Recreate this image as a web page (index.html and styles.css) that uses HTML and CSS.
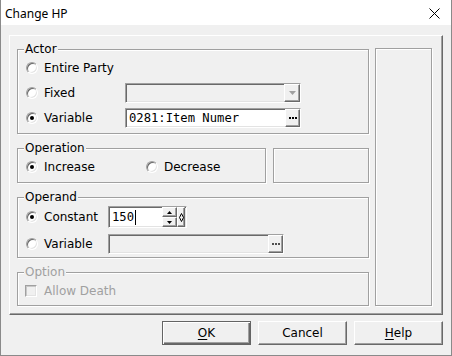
FILE: index.html
```html
<!DOCTYPE html>
<html lang="en">
<head>
  <meta charset="UTF-8">
  <title>Change HP</title>
  <link rel="stylesheet" href="styles.css">
</head>
<body>
  <div class="window">
    <div class="titlebar">
      <span class="title">Change HP</span>
      <svg class="close" width="11" height="11" viewBox="0 0 11 11">
        <path d="M0.5 0.5 L10.5 10.5 M10.5 0.5 L0.5 10.5" stroke="#000" stroke-width="1" fill="none"/>
      </svg>
    </div>

    <div class="client">
      <div class="panel">
        <div class="groups">
          <!-- Actor -->
          <div class="group actor">
            <div class="legend">Actor</div>
            <div class="row first">
              <span class="opt"><span class="radio"></span>Entire Party</span>
            </div>
            <div class="row">
              <span class="opt w99"><span class="radio"></span>Fixed</span>
              <div class="field disabled">
                <span class="value"></span>
                <span class="raised drop">
                  <svg width="7" height="4" viewBox="0 0 7 4"><path d="M0 0 H7 L3.5 4 Z" fill="#a0a0a0"/></svg>
                </span>
              </div>
            </div>
            <div class="row">
              <span class="opt w99"><span class="radio checked"></span>Variable</span>
              <div class="field">
                <span class="value mono">0281:Item Numer</span>
                <span class="raised ell">
                  <svg width="8" height="2" viewBox="0 0 8 2"><path d="M0 0h2v2H0zM3 0h2v2H3zM6 0h2v2H6z" fill="#000"/></svg>
                </span>
              </div>
            </div>
          </div>

          <!-- Operation -->
          <div class="op-line">
            <div class="group operation">
              <div class="legend">Operation</div>
              <div class="row first">
                <span class="opt w120"><span class="radio checked"></span>Increase</span>
                <span class="opt"><span class="radio"></span>Decrease</span>
              </div>
            </div>
            <div class="box small-box"></div>
          </div>

          <!-- Operand -->
          <div class="group operand">
            <div class="legend">Operand</div>
            <div class="row first tall">
              <span class="opt w82"><span class="radio checked"></span>Constant</span>
              <div class="field num">
                <span class="value mono">150<span class="caret"></span></span>
                <span class="spin">
                  <span class="raised spin-btn">
                    <svg width="5" height="3" viewBox="0 0 5 3"><path d="M2.5 0 L5 3 H0 Z" fill="#000"/></svg>
                  </span>
                  <span class="raised spin-btn">
                    <svg width="5" height="3" viewBox="0 0 5 3"><path d="M0 0 H5 L2.5 3 Z" fill="#000"/></svg>
                  </span>
                </span>
                <span class="raised tiny">
                  <svg width="5" height="9" viewBox="0 0 5 9"><path d="M2.5 0.5 L4.5 4.5 L2.5 8.5 L0.5 4.5 Z" fill="none" stroke="#000" stroke-width="1"/></svg>
                </span>
              </div>
            </div>
            <div class="row gap6">
              <span class="opt w82"><span class="radio"></span>Variable</span>
              <div class="field disabled">
                <span class="value"></span>
                <span class="raised ell">
                  <svg width="8" height="2" viewBox="0 0 8 2"><path d="M0 0h2v2H0zM3 0h2v2H3zM6 0h2v2H6z" fill="#505050"/></svg>
                </span>
              </div>
            </div>
          </div>

          <!-- Option -->
          <div class="group option muted">
            <div class="legend">Option</div>
            <div class="row check-row">
              <span class="opt"><span class="check"></span>Allow Death</span>
            </div>
          </div>
        </div>

        <div class="box side"></div>
      </div>

      <div class="buttons">
        <button class="btn default"><u>O</u>K</button>
        <button class="btn">Cancel</button>
        <button class="btn"><u>H</u>elp</button>
      </div>
    </div>
  </div>
</body>
</html>
```

FILE: styles.css
```css
* {
  box-sizing: border-box;
}
body {
  margin: 0;
  font-family: "DejaVu Sans", sans-serif;
  font-size: 12px;
  color: #000;
  background: #fff;
}
.window {
  width: 452px;
  height: 356px;
  border: 1px solid #8a8a8a;
  border-top: 0;
  background: #f0f0f0;
  display: flex;
  flex-direction: column;
}
.titlebar {
  height: 25px;
  flex: none;
  background: #fff;
  display: flex;
  align-items: center;
  justify-content: space-between;
  padding: 1px 11px 0 4px;
}
.title {
  font-family: "Noto Sans", sans-serif;
  font-size: 12px;
}
.client {
  flex: 1;
  padding: 10px 8px 0 8px;
}
.panel {
  width: 434px;
  height: 280px;
  display: flex;
  padding: 12px 0 0 7px;
  border: 1px solid;
  border-color: #fff #696969 #696969 #fff;
  box-shadow: inset -1px -1px 0 #a0a0a0;
}
.groups {
  width: 352px;
  margin-top: 1px;
  display: flex;
  flex-direction: column;
}

/* etched frames */
.group,
.box {
  border: 1px solid #a0a0a0;
  box-shadow: inset 1px 1px 0 #fff, 1px 1px 0 #fff;
}
.group {
  display: flex;
  flex-direction: column;
}
.side {
  width: 57px;
  height: 258px;
  margin-left: 6px;
}
.actor {
  height: 85px;
}
.op-line {
  display: flex;
  height: 35px;
  margin-top: 14px;
}
.operation {
  width: 249px;
}
.small-box {
  width: 96px;
  margin-left: 7px;
}
.operand {
  height: 61px;
  margin-top: 14px;
}
.option {
  height: 34px;
  margin-top: 14px;
}
.legend {
  align-self: flex-start;
  margin: -8px 0 0 6px;
  padding: 0 1px;
  line-height: 15px;
  background: #f0f0f0;
}
.muted {
  color: #a0a0a0;
}

/* rows */
.row {
  display: flex;
  align-items: center;
  height: 20px;
  margin-top: 5px;
  padding-left: 8px;
}
.row.first {
  margin-top: 1px;
}
.row.tall {
  height: 22px;
}
.row.gap6 {
  margin-top: 6px;
}
.row.check-row {
  height: 18px;
  margin-top: 2px;
  padding-left: 7px;
}
.opt {
  display: flex;
  align-items: center;
  flex: none;
}
.w99 {
  width: 99px;
}
.w82 {
  width: 82px;
}
.w120 {
  width: 120px;
}
.radio {
  position: relative;
  width: 12px;
  height: 12px;
  margin-right: 6px;
  border-radius: 50%;
  background: #fff;
  border: 1px solid;
  border-color: #a0a0a0 #fff #fff #a0a0a0;
  box-shadow: inset 1px 1px 0 #696969, inset -1px -1px 0 #e3e3e3;
}
.radio.checked::after {
  content: "";
  position: absolute;
  left: 3px;
  top: 3px;
  width: 4px;
  height: 4px;
  border-radius: 50%;
  background: #000;
}
.check {
  width: 12px;
  height: 12px;
  margin-right: 7px;
  background: #f0f0f0;
  border: 1px solid;
  border-color: #a0a0a0 #fff #fff #a0a0a0;
  box-shadow: inset 1px 1px 0 #c8c8c8, inset -1px -1px 0 #e3e3e3;
}

/* sunken edit fields */
.field {
  width: 176px;
  height: 20px;
  display: flex;
  align-items: center;
  background: #fff;
  border: 1px solid;
  border-color: #a0a0a0 #fff #fff #a0a0a0;
  box-shadow: inset 1px 1px 0 #696969, inset -1px -1px 0 #e3e3e3;
}
.field.disabled {
  background: #f0f0f0;
}
.value {
  flex: 1;
  display: flex;
  align-items: center;
  padding-left: 3px;
  white-space: nowrap;
  overflow: hidden;
}
.mono {
  font-family: "DejaVu Sans Mono", monospace;
  font-size: 12.2px;
}
.caret {
  width: 1px;
  height: 15px;
  margin-left: 1px;
  background: #000;
}
.raised {
  display: flex;
  align-items: center;
  justify-content: center;
  background: #f0f0f0;
  border: 1px solid;
  border-color: #fff #696969 #696969 #fff;
  box-shadow: inset -1px -1px 0 #a0a0a0;
}
.drop {
  width: 16px;
  height: 18px;
}
.ell {
  width: 15px;
  height: 18px;
}
.num {
  width: 79px;
  height: 22px;
}
.spin {
  display: flex;
  flex-direction: column;
  width: 15px;
  height: 20px;
}
.spin-btn {
  height: 10px;
}
.tiny {
  width: 8px;
  height: 20px;
  margin-right: 1px;
}

/* dialog buttons */
.buttons {
  display: flex;
  justify-content: flex-end;
  gap: 7px;
  margin-top: 6px;
}
.btn {
  width: 89px;
  height: 24px;
  padding: 0;
  font-family: "DejaVu Sans", sans-serif;
  font-size: 12px;
  color: #000;
  background: #f0f0f0;
  border: 1px solid;
  border-color: #fff #696969 #696969 #fff;
  box-shadow: inset -1px -1px 0 #a0a0a0;
}
.btn.default {
  border-color: #646464;
  box-shadow: inset 1px 1px 0 #fff, inset -1px -1px 0 #696969, inset -2px -2px 0 #a0a0a0;
}
.btn u {
  text-underline-offset: 2px;
}
```
